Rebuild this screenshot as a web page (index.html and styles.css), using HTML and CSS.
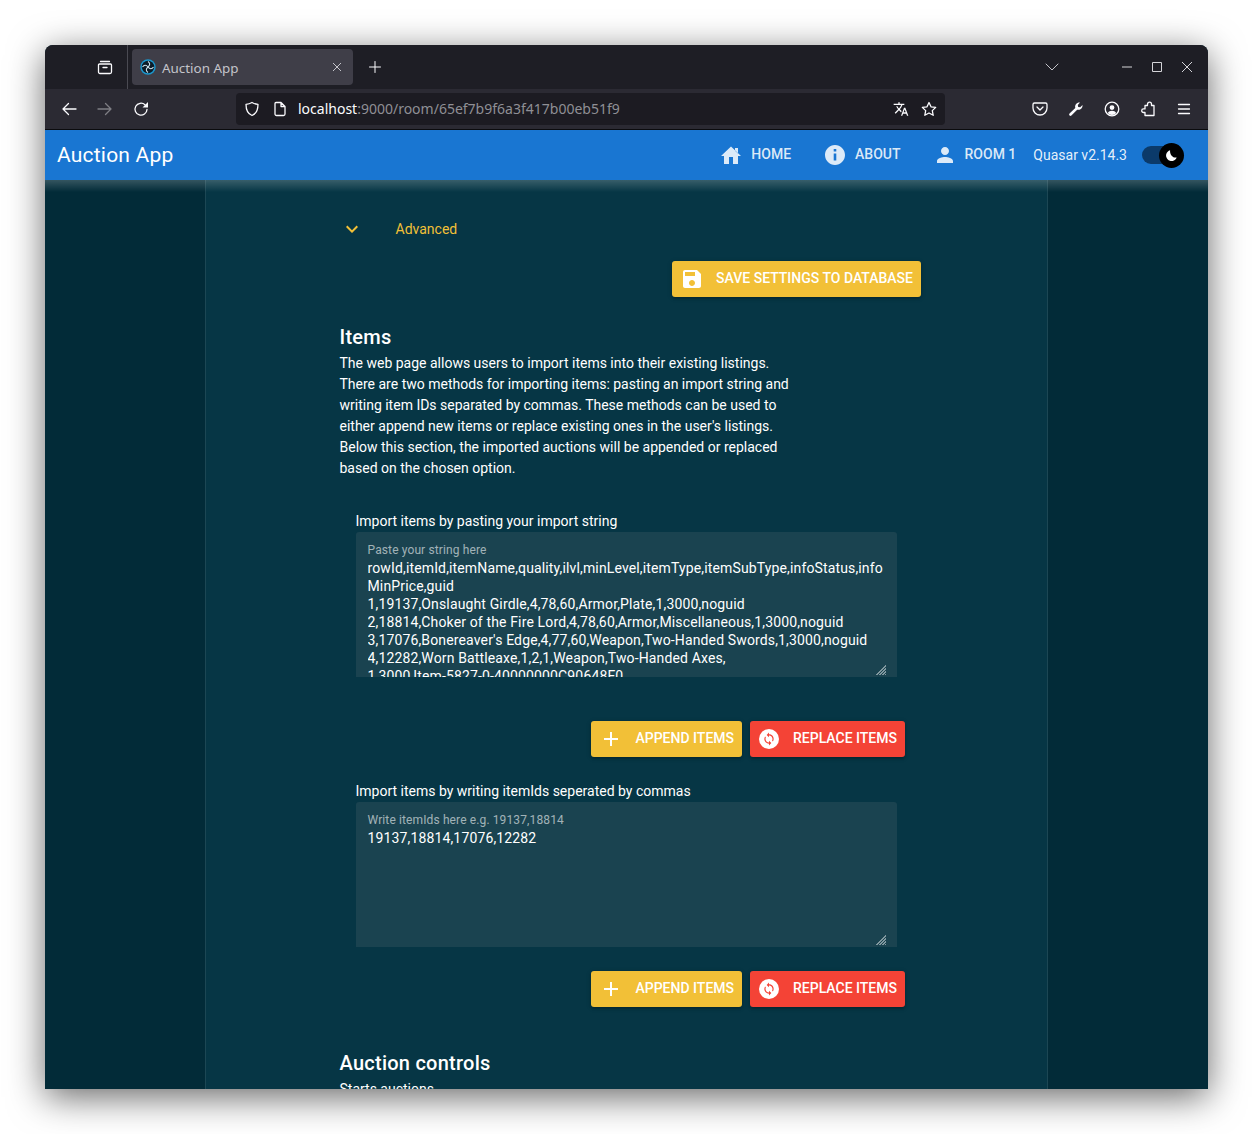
FILE: index.html
```html
<!DOCTYPE html>
<html lang="en">
<head>
    <meta charset="UTF-8">
    <meta name="viewport" content="width=device-width, initial-scale=1.0">
    <title>Auction App</title>
    <link rel="stylesheet" href="styles.css">
</head>
<body>
    <div class="window">
        <!-- Browser tab strip -->
        <div class="tabstrip">
            <div class="tabstrip-left">
                <svg class="ff-icon" viewBox="0 0 16 16"><path d="M3.500 2.500h9M2.500 5h11a1 1 0 0 1 1 1v7a1.500 1.500 0 0 1-1.500 1.500h-10A1.500 1.500 0 0 1 1.500 13V6a1 1 0 0 1 1-1zM6 8.500h4"/></svg>
            </div>
            <div class="tab">
                <svg class="favicon" viewBox="0 0 16 16"><circle cx="8" cy="8" r="7.700" fill="#1b96cc"/><circle cx="8" cy="8" r="6.200" fill="#0c1c28"/><path d="M8 2.500C10 4 10.500 6 8 8M13.500 8C12 10 10 10.500 8 8M8 13.500C6 12 5.500 10 8 8M2.500 8C4 6 6 5.500 8 8" fill="none" stroke="#cfe3ee" stroke-width="1.100"/></svg>
                <span class="tab-title">Auction App</span>
                <svg class="tab-close" viewBox="0 0 12 12"><path d="M2 2l8 8M10 2l-8 8"/></svg>
            </div>
            <svg class="ff-icon new-tab" viewBox="0 0 16 16"><path d="M8 2.500v11M2.500 8h11"/></svg>
            <div class="tabstrip-right">
                <svg class="ff-icon list-tabs" viewBox="0 0 16 16"><path d="M2 5l6 6 6-6"/></svg>
                <div class="win-controls">
                    <svg class="win-btn" viewBox="0 0 12 12"><path d="M1 6h10"/></svg>
                    <svg class="win-btn" viewBox="0 0 12 12"><path d="M1.500 1.500h9v9h-9z"/></svg>
                    <svg class="win-btn" viewBox="0 0 12 12"><path d="M1 1l10 10M11 1L1 11"/></svg>
                </div>
            </div>
        </div>

        <!-- Browser toolbar -->
        <div class="toolbar">
            <div class="nav-btns">
                <svg class="ff-icon" viewBox="0 0 16 16"><path d="M15 8H2M7.500 2.500L2 8l5.500 5.500"/></svg>
                <svg class="ff-icon dim" viewBox="0 0 16 16"><path d="M1 8h13M8.500 2.500L14 8l-5.500 5.500"/></svg>
                <svg class="ff-icon" viewBox="0 0 16 16"><path d="M14 8.500A6 6 0 1 1 12 3.700"/><path class="solid" d="M15 1v5.500H9.500z"/></svg>
            </div>
            <div class="urlbar">
                <svg class="ff-icon" viewBox="0 0 16 16"><path d="M8 1.500c2 1.200 3.800 1.700 6 1.800 0 5.500-1.500 9.500-6 11.200C3.500 12.800 2 8.800 2 3.300c2.200-.1 4-.6 6-1.800z"/></svg>
                <svg class="ff-icon page-icon" viewBox="0 0 16 16"><path d="M4 1.500h5l4 4V13a1.500 1.500 0 0 1-1.500 1.500h-7A1.500 1.500 0 0 1 3 13V2.500a1 1 0 0 1 1-1zM9 1.500v4h4"/></svg>
                <span class="url"><span class="url-host">localhost</span>:9000/room/65ef7b9f6a3f417b00eb51f9</span>
                <div class="url-actions">
                    <svg class="filled-icon" viewBox="0 0 24 24"><path d="M12.870 15.070l-2.540-2.510.03-.03c1.740-1.940 2.980-4.170 3.710-6.530H17V4h-7V2H8v2H1v1.990h11.170C11.500 7.920 10.440 9.750 9 11.350 8.070 10.320 7.300 9.190 6.690 8h-2c.73 1.630 1.730 3.170 2.980 4.560l-5.090 5.020L4 19l5-5 3.110 3.110.76-2.040zM18.500 10h-2L12 22h2l1.120-3h4.750L21 22h2l-4.500-12zm-2.620 7l1.620-4.330L19.120 17h-3.240z"/></svg>
                    <svg class="ff-icon" viewBox="0 0 16 16"><path d="M8 1.500l2 4.300 4.700.6-3.400 3.200.9 4.700L8 12l-4.200 2.300.9-4.700L1.300 6.400 6 5.800z"/></svg>
                </div>
            </div>
            <div class="tool-btns">
                <svg class="ff-icon" viewBox="0 0 16 16"><path d="M2.500 2h11A1.500 1.500 0 0 1 15 3.500V7a7 7 0 0 1-14 0V3.500A1.500 1.500 0 0 1 2.500 2zM5 6l3 3 3-3"/></svg>
                <svg class="ff-icon" viewBox="0 0 16 16"><path class="solid" d="M1.500 12.600L7.300 6.900C6.500 4.200 8.600 1.300 12 1.600L9.800 3.900l.4 2 2 .4 2.300-2.200c.3 3.300-2.500 5.400-5.300 4.600l-5.800 5.700a1.200 1.200 0 0 1-1.900-1.800z"/></svg>
                <svg class="ff-icon" viewBox="0 0 16 16"><circle cx="8" cy="8" r="6.800"/><path class="solid" d="M8 4.200a2.400 2.400 0 1 1 0 4.800 2.400 2.400 0 0 1 0-4.800zM3.800 12c.8-1.500 2.400-2.200 4.200-2.200s3.400.7 4.200 2.200A6 6 0 0 1 8 14a6 6 0 0 1-4.200-2z"/></svg>
                <svg class="ff-icon" viewBox="0 0 16 16"><path d="M5 4.500h2.500V3.200a2 2 0 0 1 4 0v1.300H14v10H5v-3H3.500a1.800 1.800 0 0 1 0-3.600H5z"/></svg>
                <svg class="ff-icon" viewBox="0 0 16 16"><path d="M2.500 3.500h11M2.500 8h11M2.500 12.500h11"/></svg>
            </div>
        </div>

        <!-- App header -->
        <header class="app-header">
            <div class="app-title">Auction App</div>
            <nav class="app-nav">
                <a class="nav-item">
                    <svg class="nav-icon" viewBox="0 0 24 24"><path d="M10 21v-7h4v7h5v-8h3L12 3.500 2 13h3v8zM16 5h3v5.500l-3-2.800z"/></svg>
                    <span>Home</span>
                </a>
                <a class="nav-item">
                    <svg class="nav-icon" viewBox="0 0 24 24"><path d="M12 2C6.480 2 2 6.480 2 12s4.480 10 10 10 10-4.480 10-10S17.520 2 12 2zm1.300 15.500h-2.600v-7h2.600v7zm0-9h-2.600V6h2.600v2.500z"/></svg>
                    <span>About</span>
                </a>
                <a class="nav-item nav-room">
                    <svg class="nav-icon" viewBox="0 0 24 24"><path d="M12 12c2.210 0 4-1.790 4-4s-1.790-4-4-4-4 1.790-4 4 1.790 4 4 4zm0 2c-2.670 0-8 1.340-8 4v2h16v-2c0-2.660-5.330-4-8-4z"/></svg>
                    <span>Room 1</span>
                </a>
            </nav>
            <span class="version">Quasar v2.14.3</span>
            <div class="toggle">
                <div class="toggle-track"></div>
                <div class="toggle-thumb">
                    <svg viewBox="0 0 16 16"><path d="M6.500 2.500a5.800 5.800 0 1 0 7 7.500c-3.500 1-7.500-2.500-7-7.500z" fill="#fff"/></svg>
                </div>
            </div>
        </header>

        <!-- Page -->
        <div class="page">
            <div class="gutter"></div>
            <main class="center">
                <div class="content">
                    <div class="expansion">
                        <svg class="chevron" viewBox="0 0 24 24"><path d="M7.410 8.590L12 13.170l4.590-4.580L18 10l-6 6-6-6z"/></svg>
                        <span>Advanced</span>
                    </div>
                    <div class="save-row">
                        <button class="btn btn-yellow">
                            <svg class="btn-icon" viewBox="0 0 24 24"><path d="M17 3H5c-1.110 0-2 .9-2 2v14c0 1.100.89 2 2 2h14c1.100 0 2-.9 2-2V7l-4-4zm-5 16c-1.660 0-3-1.340-3-3s1.340-3 3-3 3 1.340 3 3-1.340 3-3 3zm3-10H5V5h10v4z"/></svg>
                            <span class="btn-label">Save settings to database</span>
                        </button>
                    </div>

                    <h2 class="section-title">Items</h2>
                    <p class="section-text">The web page allows users to import items into their existing listings. There are two methods for importing items: pasting an import string and writing item IDs separated by commas. These methods can be used to either append new items or replace existing ones in the user's listings. Below this section, the imported auctions will be appended or replaced based on the chosen option.</p>

                    <div class="import-block">
                        <label class="field-label" for="importString">Import items by pasting your import string</label>
                        <div class="field">
                            <div class="field-hint">Paste your string here</div>
                            <textarea id="importString" class="field-input" spellcheck="false">rowId,itemId,itemName,quality,ilvl,minLevel,itemType,itemSubType,infoStatus,infoMinPrice,guid
1,19137,Onslaught Girdle,4,78,60,Armor,Plate,1,3000,noguid
2,18814,Choker of the Fire Lord,4,78,60,Armor,Miscellaneous,1,3000,noguid
3,17076,Bonereaver's Edge,4,77,60,Weapon,Two-Handed Swords,1,3000,noguid
4,12282,Worn Battleaxe,1,2,1,Weapon,Two-Handed Axes,
1,3000,Item-5827-0-40000000C90648F0</textarea>
                        </div>
                        <div class="btn-row btn-row-first">
                            <button class="btn btn-yellow">
                                <svg class="btn-icon" viewBox="0 0 24 24"><path d="M11 5h2v6h6v2h-6v6h-2v-6H5v-2h6z"/></svg>
                                <span class="btn-label">Append items</span>
                            </button>
                            <button class="btn btn-red">
                                <span class="sync-badge"><svg viewBox="0 0 24 24"><path d="M12 4V1L8 5l4 4V6c3.310 0 6 2.690 6 6 0 1.010-.25 1.970-.7 2.800l1.460 1.460C19.540 15.030 20 13.570 20 12c0-4.420-3.580-8-8-8zm0 14c-3.310 0-6-2.690-6-6 0-1.010.25-1.970.7-2.800L5.240 7.740C4.460 8.970 4 10.430 4 12c0 4.420 3.580 8 8 8v3l4-4-4-4v3z"/></svg></span>
                                <span class="btn-label">Replace items</span>
                            </button>
                        </div>
                    </div>

                    <div class="import-block">
                        <label class="field-label" for="importIds">Import items by writing itemIds seperated by commas</label>
                        <div class="field">
                            <div class="field-hint">Write itemIds here e.g. 19137,18814</div>
                            <textarea id="importIds" class="field-input" spellcheck="false">19137,18814,17076,12282</textarea>
                        </div>
                        <div class="btn-row">
                            <button class="btn btn-yellow">
                                <svg class="btn-icon" viewBox="0 0 24 24"><path d="M11 5h2v6h6v2h-6v6h-2v-6H5v-2h6z"/></svg>
                                <span class="btn-label">Append items</span>
                            </button>
                            <button class="btn btn-red">
                                <span class="sync-badge"><svg viewBox="0 0 24 24"><path d="M12 4V1L8 5l4 4V6c3.310 0 6 2.690 6 6 0 1.010-.25 1.970-.7 2.800l1.460 1.460C19.540 15.030 20 13.570 20 12c0-4.420-3.580-8-8-8zm0 14c-3.310 0-6-2.690-6-6 0-1.010.25-1.970.7-2.800L5.240 7.740C4.460 8.970 4 10.430 4 12c0 4.420 3.580 8 8 8v3l4-4-4-4v3z"/></svg></span>
                                <span class="btn-label">Replace items</span>
                            </button>
                        </div>
                    </div>

                    <h2 class="section-title section-controls">Auction controls</h2>
                    <p class="section-text">Starts auctions</p>
                </div>
            </main>
            <div class="gutter"></div>
        </div>
    </div>
</body>
</html>
```

FILE: styles.css
```css
* {
    box-sizing: border-box;
}

html, body {
    margin: 0;
    height: 100%;
    overflow: hidden;
    background-color: #fff;
}

body {
    padding: 45px 45px 0;
    font-family: Roboto, "Liberation Sans", sans-serif;
    font-size: 14px;
    color: #fff;
}

.window {
    height: 1044px;
    display: flex;
    flex-direction: column;
    overflow: hidden;
    border-radius: 8px 8px 0 0;
    background-color: #022b38;
    box-shadow: 0 8px 36px rgba(0, 0, 0, 0.6);
}

/* Browser chrome */
.tabstrip {
    height: 44px;
    flex: none;
    display: flex;
    align-items: center;
    background-color: #1e1e25;
}

.tabstrip-left {
    width: 83px;
    height: 44px;
    flex: none;
    display: flex;
    align-items: center;
    justify-content: flex-end;
    padding-right: 14px;
    border-right: 1px solid #4a4a52;
}

.ff-icon {
    width: 16px;
    height: 16px;
    flex: none;
    fill: none;
    stroke: #fbfbfe;
    stroke-width: 1.3;
    stroke-linecap: round;
    stroke-linejoin: round;
}

.ff-icon .solid {
    fill: #fbfbfe;
    stroke: none;
}

.ff-icon.dim {
    opacity: 0.4;
}

.tab {
    width: 221px;
    height: 36px;
    margin-left: 4px;
    padding: 0 10px 0 8px;
    flex: none;
    display: flex;
    align-items: center;
    border-radius: 4px;
    background-color: #3f3e48;
}

.favicon {
    width: 16px;
    height: 16px;
    flex: none;
}

.tab-title {
    margin: 2px 0 0 6px;
    flex: 1;
    font-family: "Noto Sans", sans-serif;
    font-size: 13.4px;
    color: #c4c4ca;
}

.tab-close {
    width: 12px;
    height: 12px;
    fill: none;
    stroke: #c4c4ca;
    stroke-width: 1;
}

.new-tab {
    margin-left: 14px;
    stroke-width: 1;
}

.tabstrip-right {
    margin-left: auto;
    display: flex;
    align-items: center;
}

.list-tabs {
    stroke-width: 1;
    stroke: #c4c4ca;
    margin-right: 61px;
}

.win-controls {
    display: flex;
    gap: 18px;
    margin-right: 15px;
}

.win-btn {
    width: 12px;
    height: 12px;
    fill: none;
    stroke: #d4d4d8;
    stroke-width: 1;
}

.toolbar {
    height: 41px;
    flex: none;
    display: flex;
    align-items: center;
    background-color: #2b2a33;
    border-bottom: 1px solid #0b0b0e;
}

.nav-btns {
    width: 191px;
    padding-left: 16px;
    flex: none;
    display: flex;
    gap: 20px;
}

.urlbar {
    width: 709px;
    height: 32px;
    flex: none;
    display: flex;
    align-items: center;
    padding: 0 8px;
    border-radius: 4px;
    background-color: #1c1b22;
}

.page-icon {
    margin-left: 12px;
}

.url {
    margin: 0 0 2px 10px;
    font-family: "Noto Sans", sans-serif;
    font-size: 14px;
    color: #8f8f95;
}

.url-host {
    color: #fbfbfe;
}

.url-actions {
    margin-left: auto;
    display: flex;
    align-items: center;
    gap: 12px;
}

.filled-icon {
    width: 16px;
    height: 16px;
    fill: #fbfbfe;
}

.tool-btns {
    margin-left: 87px;
    display: flex;
    gap: 20px;
}

/* App header */
.app-header {
    height: 50px;
    flex: none;
    display: flex;
    align-items: center;
    padding: 0 23px 0 12px;
    background-color: #1976d2;
}

.app-title {
    font-size: 21px;
    letter-spacing: 0.01em;
    flex: 1;
}

.app-nav {
    display: flex;
    align-items: center;
}

.nav-item {
    display: flex;
    align-items: center;
    padding: 0 16px;
    font-weight: 500;
    text-transform: uppercase;
    color: rgba(255, 255, 255, 0.85);
}

.nav-item span {
    margin-bottom: 2px;
}

.nav-icon {
    width: 24px;
    height: 24px;
    margin-right: 8px;
    fill: rgba(255, 255, 255, 0.85);
}

.nav-room {
    padding-right: 0;
}

.version {
    margin-left: 17px;
    color: rgba(255, 255, 255, 0.9);
}

.toggle {
    position: relative;
    width: 44px;
    height: 26px;
    margin-left: 14px;
}

.toggle-track {
    position: absolute;
    left: 1px;
    top: 4px;
    width: 32px;
    height: 18px;
    border-radius: 9px;
    background-color: #0b3a6a;
}

.toggle-thumb {
    position: absolute;
    left: 18px;
    top: 1px;
    width: 25px;
    height: 25px;
    padding: 5px;
    border-radius: 50%;
    background-color: #000;
}

.toggle-thumb svg {
    display: block;
}

/* Page */
.page {
    position: relative;
    flex: 1;
    min-height: 0;
    display: flex;
    background-color: #022b38;
}

.page::before {
    content: "";
    position: absolute;
    left: 0;
    right: 0;
    top: 0;
    height: 12px;
    background: linear-gradient(rgba(255, 255, 255, 0.2), rgba(255, 255, 255, 0));
}

.gutter {
    flex: 1;
}

.center {
    width: 843px;
    flex: none;
    padding-left: 133.5px;
    overflow: hidden;
    background-color: #063645;
    border-left: 1px solid #1c4754;
    border-right: 1px solid #1c4754;
}

.content {
    width: 581.5px;
}

.expansion {
    height: 48px;
    margin-top: 25px;
    display: flex;
    align-items: center;
    color: #f2c037;
}

.chevron {
    width: 24px;
    height: 24px;
    margin-right: 32px;
    fill: #f2c037;
}

.save-row {
    margin-top: 8px;
    display: flex;
    justify-content: flex-end;
}

.btn {
    height: 36px;
    padding: 0 8px;
    display: flex;
    align-items: center;
    border: none;
    border-radius: 3px;
    font-family: inherit;
    font-size: 14px;
    font-weight: 500;
    text-transform: uppercase;
    color: #fff;
    box-shadow: 0 1px 5px rgba(0, 0, 0, 0.2), 0 2px 2px rgba(0, 0, 0, 0.14);
}

.btn-yellow {
    background-color: #f2c037;
}

.btn-red {
    background-color: #f44336;
}

.btn-label {
    margin-bottom: 2px;
}

.btn-icon {
    width: 24px;
    height: 24px;
    margin-right: 12px;
    fill: #fff;
}

.section-title {
    margin: 28px 0 0;
    font-size: 20px;
    line-height: 24px;
    font-weight: 500;
    letter-spacing: 0.0125em;
}

.section-text {
    width: 450px;
    margin: 4px 0 0;
    line-height: 21px;
}

.import-block {
    margin: 32px 0 0 16px;
    width: 549.5px;
}

.import-block + .import-block {
    margin-top: 24px;
}

.field-label {
    display: block;
    line-height: 20px;
}

.field {
    width: 541.5px;
    height: 145px;
    margin-top: 1px;
    padding: 9px 11px 0 12px;
    border-radius: 3px 3px 0 0;
    background-color: #1a4350;
}

.field-hint {
    font-size: 12px;
    line-height: 18px;
    letter-spacing: 0.01em;
    color: rgba(255, 255, 255, 0.6);
}

.field-input {
    display: block;
    width: 518.5px;
    height: 118px;
    padding: 0;
    border: none;
    outline: none;
    overflow: hidden;
    resize: vertical;
    color-scheme: dark;
    background: transparent;
    font-family: inherit;
    font-size: 14px;
    line-height: 18px;
    letter-spacing: 0.01em;
    color: #fff;
}

/* hatched grip, the default one is much smaller than the reference */
.field-input::-webkit-resizer {
    background:
        linear-gradient(135deg, #1a4350 50%, transparent 50%) right 0 bottom 2px / 11px 11px no-repeat,
        repeating-linear-gradient(135deg, rgba(255, 255, 255, 0.45) 0 1px, transparent 1px 2.1px) right 0 bottom 2px / 11px 11px no-repeat;
}

.btn-row {
    margin-top: 24px;
    display: flex;
    justify-content: flex-end;
    gap: 8px;
}

.btn-row-first {
    margin-top: 44px;
}

.btn-row .btn-red {
    padding-left: 9px;
}

.sync-badge {
    width: 20px;
    height: 20px;
    margin-right: 14px;
    padding: 3px;
    border-radius: 50%;
    background-color: #fff;
}

.sync-badge svg {
    display: block;
    fill: #f44336;
}

.section-controls {
    margin-top: 44px;
}
```
